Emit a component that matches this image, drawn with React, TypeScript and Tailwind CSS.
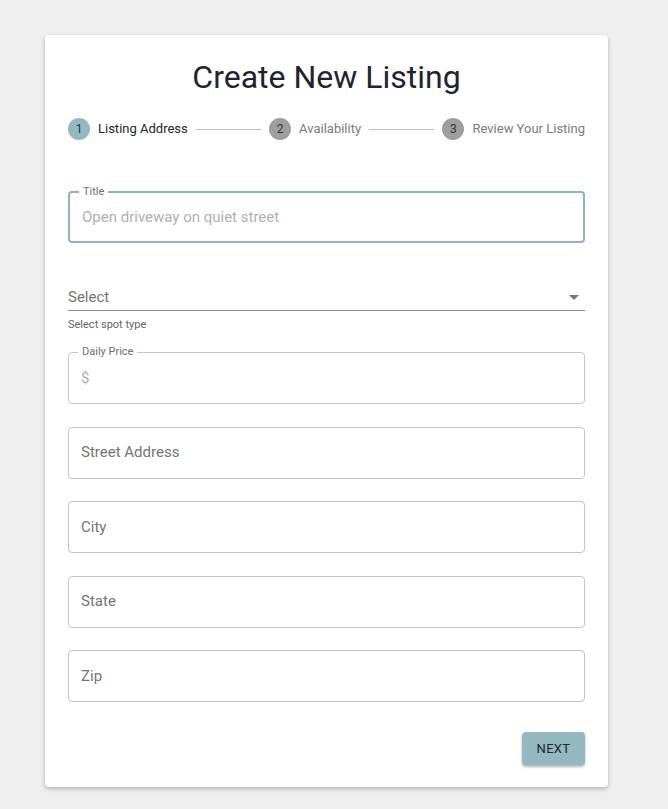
import React from 'react';

const font = { fontFamily: 'Roboto, "Liberation Sans", sans-serif' };

interface StepProps {
  n: number;
  label: string;
  active?: boolean;
}

const Step: React.FC<StepProps> = ({ n, label, active = false }) => (
  <div className="flex items-center gap-2 shrink-0">
    <div
      className={`w-[22px] h-[22px] rounded-full flex items-center justify-center text-[12px] text-[#333] ${
        active ? 'bg-[#93b8c0]' : 'bg-[#9e9e9e]'
      }`}
    >
      {n}
    </div>
    <span className={`text-[13px] ${active ? 'text-[#1f2530]' : 'text-[#7b7b7b]'}`}>{label}</span>
  </div>
);

const Connector: React.FC = () => <div className="flex-1 h-px bg-[#bdbdbd] mx-2" />;

interface FieldProps {
  label?: string;
  placeholder: string;
  focused?: boolean;
  muted?: boolean;
}

const OutlinedField: React.FC<FieldProps> = ({ label, placeholder, focused = false, muted = false }) => (
  <div
    className={`relative h-[52px] rounded-[4px] flex items-center px-[12px] ${
      focused ? 'border-2 border-[#8fb5bd] px-[11px]' : 'border border-[#c4c4c4]'
    }`}
  >
    {label && (
      <span className="absolute -top-[8px] left-[9px] bg-white px-[4px] text-[11px] leading-[14px] text-[#6f6f6f]">
        {label}
      </span>
    )}
    <span className={`text-[15px] ${muted ? 'text-[#b0b0b0]' : 'text-[#757575]'}`}>{placeholder}</span>
  </div>
);

export default function App() {
  return (
    <div className="min-h-[809px] bg-[#efefef] pt-[35px]" style={font}>
      <div className="ml-[45px] w-[563px] bg-white rounded-[4px] shadow-[0_2px_4px_rgba(0,0,0,0.25)] px-[23px] pt-[22px] pb-[22px]">
        <h1 className="text-center text-[32px] leading-[40px] text-[#1f2530]">Create New Listing</h1>

        <div className="flex items-center mt-[21px] h-[22px]">
          <Step n={1} label="Listing Address" active />
          <Connector />
          <Step n={2} label="Availability" />
          <Connector />
          <Step n={3} label="Review Your Listing" />
        </div>

        <div className="mt-[51px]">
          <OutlinedField label="Title" placeholder="Open driveway on quiet street" focused muted />
        </div>

        <div className="mt-[38px]">
          <div className="flex items-center justify-between h-[30px] pt-[4px] border-b border-[#8c8c8c]">
            <span className="text-[15px] text-[#757575]">Select</span>
            <svg width="10" height="5" viewBox="0 0 10 5" className="mr-[6px]">
              <path d="M0 0 L10 0 L5 5 Z" fill="#757575" />
            </svg>
          </div>
          <div className="text-[11px] leading-[14px] text-[#666] mt-[7px]">Select spot type</div>
        </div>

        <div className="flex flex-col gap-[22.5px] mt-[20px]">
          <OutlinedField label="Daily Price" placeholder="$" muted />
          <OutlinedField placeholder="Street Address" />
          <OutlinedField placeholder="City" />
          <OutlinedField placeholder="State" />
          <OutlinedField placeholder="Zip" />
        </div>

        <div className="flex justify-end mt-[30px]">
          <button className="w-[63px] h-[33px] rounded-[4px] bg-[#94b8c0] text-[13px] tracking-[0.3px] text-[#1c2833] shadow-[0_2px_3px_rgba(0,0,0,0.3)]">
            NEXT
          </button>
        </div>
      </div>
    </div>
  );
}
